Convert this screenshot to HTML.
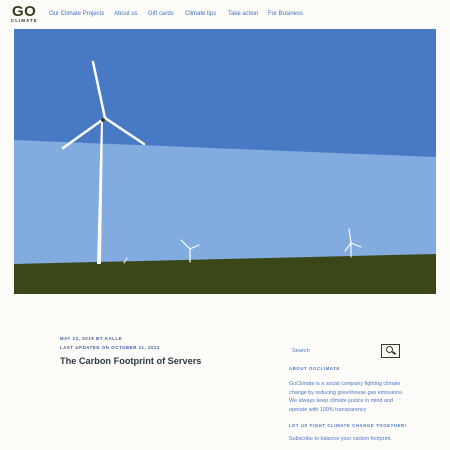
<!DOCTYPE html>
<html><head><style>
body{margin:0;width:450px;height:450px;background:#fdfcf8;font-family:"Liberation Sans",sans-serif;position:relative;overflow:hidden}
.a{position:absolute;white-space:nowrap}
.nav{color:#3f6fc0;font-size:6px;top:11px}
.m{font-size:4.3px;font-weight:bold;letter-spacing:0.6px;color:#3a5aa0}
.s{font-size:5.4px;color:#4a78c8;line-height:8.5px}
</style></head><body>
<div class="a" style="left:12px;top:3px;font-size:15px;font-weight:bold;color:#2e3d1a;letter-spacing:0.5px">GO</div>
<div class="a" style="left:11px;top:18px;font-size:4.5px;font-weight:bold;color:#2e3d1a;letter-spacing:1px">CLIMATE</div>
<div class="a nav" style="left:49px">Our Climate Projects</div>
<div class="a nav" style="left:114px">About us</div>
<div class="a nav" style="left:148px">Gift cards</div>
<div class="a nav" style="left:185px">Climate tips</div>
<div class="a nav" style="left:228px">Take action</div>
<div class="a nav" style="left:268px">For Business</div>
<svg class="a" style="left:14px;top:29px" width="422" height="265" viewBox="14 29 422 265">
<rect x="14" y="29" width="422" height="265" fill="#4779c4"/>
<polygon points="14,140 436,157 436,294 14,294" fill="#82abe0"/>
<polygon points="14,264 436,254 436,294 14,294" fill="#3a4719"/>
<polygon points="97,264 101,264 103,120 101,120" fill="#fff"/>
<g stroke="#fff" stroke-linecap="round" fill="none">
<path d="M105,118 L93,62" stroke-width="2.5"/>
<path d="M105,118 L63,148" stroke-width="2.5"/>
<path d="M105,118 L144,144" stroke-width="2.5"/>
<path d="M190,249 L190,262 M190,249 L181,240 M190,249 L199,245" stroke-width="1.2"/>
<path d="M351,243 L351,257 M351,243 L349,229 M351,243 L361,247 M351,243 L345,251" stroke-width="1.1"/>
<path d="M124,263 L127,258" stroke-width="1"/>
</g>
<circle cx="103" cy="120" r="2" fill="#2e3d1a"/>
</svg>
<div class="a m" style="left:60px;top:336px">MAY 23, 2019 BY KALLE</div>
<div class="a m" style="left:60px;top:345px">LAST UPDATED ON OCTOBER 11, 2022</div>
<div class="a" style="left:60px;top:356px;font-size:9.2px;font-weight:bold;color:#2b3a44">The Carbon Footprint of Servers</div>
<div class="a" style="left:292px;top:348px;font-size:5.6px;color:#4a78c8">Search</div>
<div class="a" style="left:381px;top:344px;width:17px;height:12px;border:1px solid #2e3d1a"></div>
<div class="a" style="left:386px;top:346px;width:5px;height:5px;border:1.8px solid #2e3d1a;border-radius:50%"></div>
<div class="a" style="left:392px;top:352px;width:4px;height:2px;background:#2e3d1a;transform:rotate(40deg)"></div>
<div class="a m" style="left:289px;top:366px;color:#4a78c8">ABOUT GOCLIMATE</div>
<div class="a s" style="left:289px;top:380px">GoClimate is a social company fighting climate<br>change by reducing greenhouse gas emissions.<br>We always keep climate justice in mind and<br>operate with 100% transparency</div>
<div class="a m" style="left:289px;top:423px;color:#4a78c8">LET US FIGHT CLIMATE CHANGE TOGETHER!</div>
<div class="a s" style="left:289px;top:435px">Subscribe to balance your carbon footprint.</div>
</body></html>
